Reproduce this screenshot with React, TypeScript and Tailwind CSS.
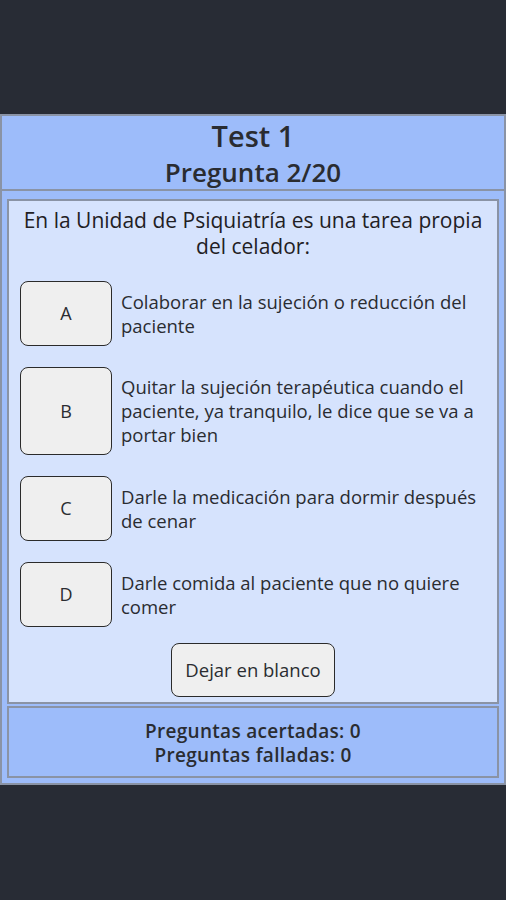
import React from "react";

const font = { fontFamily: '"Open Sans", "Noto Sans", sans-serif' };

const options = [
  { l: "A", t: ["Colaborar en la sujeción o reducción del", "paciente"], h: "h-[65px]", mt: "mt-[22px]" },
  { l: "B", t: ["Quitar la sujeción terapéutica cuando el", "paciente, ya tranquilo, le dice que se va a", "portar bien"], h: "h-[88px]", mt: "mt-[21px]" },
  { l: "C", t: ["Darle la medicación para dormir después", "de cenar"], h: "h-[65px]", mt: "mt-[21px]" },
  { l: "D", t: ["Darle comida al paciente que no quiere", "comer"], h: "h-[65px]", mt: "mt-[21px]" },
];

export default function App() {
  return (
    <div className="h-[900px] w-[506px] bg-[#282c35] pt-[114px] text-[#2a2c31]" style={font}>
      <div className="border-2 border-[#8a93a5] bg-[#9dbcfa] flex flex-col">
        <div className="h-[75px] pt-[3px] border-b-2 border-[#8a93a5] flex flex-col items-center justify-center">
          <div className="text-[29px] leading-[37px] font-semibold">Test 1</div>
          <div className="text-[26px] leading-[37px] font-semibold">Pregunta 2/20</div>
        </div>
        <div className="px-[5px] pt-[8px] pb-[5px] flex flex-col gap-[2px]">
          <div className="h-[505px] border-2 border-[#8a93a5] bg-[#d6e3fd] flex flex-col px-[11px]">
            <div className="pt-[6px] text-center text-[21px] leading-[26px] text-[#1f2024]">
              En la Unidad de Psiquiatría es una tarea propia
              <br />
              del celador:
            </div>
            {options.map((o) => (
              <div key={o.l} className={`flex items-center ${o.mt}`}>
                <div className={`w-[92px] ${o.h} shrink-0 rounded-[8px] border border-[#2b2b2b] bg-[#efefef] flex items-center justify-center text-[18px]`}>
                  {o.l}
                </div>
                <div className="ml-[9px] text-[18.5px] leading-[24px] text-[#2a2c31] whitespace-nowrap">
                  {o.t.map((line, i) => (
                    <div key={i}>{line}</div>
                  ))}
                </div>
              </div>
            ))}
            <div className="flex justify-center mt-[16px]">
              <div className="w-[164px] h-[54px] rounded-[8px] border border-[#2b2b2b] bg-[#efefef] flex items-center justify-center text-[18.5px]">
                Dejar en blanco
              </div>
            </div>
          </div>
          <div className="h-[72px] border-2 border-[#8a93a5] flex flex-col items-center justify-center text-[19px] tracking-[0.3px] leading-[24px] font-semibold pt-[2px]">
            <div>Preguntas acertadas: 0</div>
            <div>Preguntas falladas: 0</div>
          </div>
        </div>
      </div>
    </div>
  );
}
